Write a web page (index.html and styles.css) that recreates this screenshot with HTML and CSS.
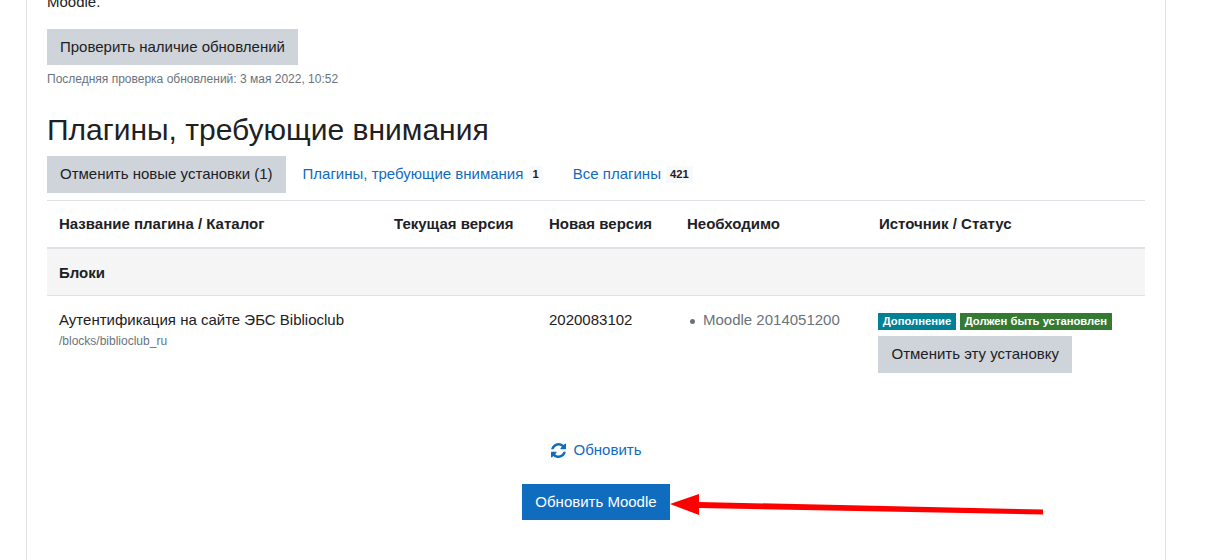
FILE: index.html
```html
<!DOCTYPE html>
<html lang="ru">
<head>
<meta charset="utf-8">
<title>Плагины, требующие внимания</title>
<link rel="stylesheet" href="styles.css">
</head>
<body>
<main class="card">
  <p class="intro">Moodle.</p>
  <a class="btn btn-grey check-btn">Проверить наличие обновлений</a>
  <p class="last-check">Последняя проверка обновлений: 3 мая 2022, 10:52</p>
  <h2 class="title">Плагины, требующие внимания</h2>
  <nav class="filters">
    <a class="btn btn-grey">Отменить новые установки (1)</a>
    <a class="filter-link">Плагины, требующие внимания <span class="count">1</span></a>
    <a class="filter-link">Все плагины <span class="count">421</span></a>
  </nav>
  <table class="plugins">
    <colgroup>
      <col class="c1"><col class="c2"><col class="c3"><col class="c4"><col class="c5">
    </colgroup>
    <thead>
      <tr>
        <th>Название плагина / Каталог</th>
        <th>Текущая версия</th>
        <th>Новая версия</th>
        <th>Необходимо</th>
        <th>Источник / Статус</th>
      </tr>
    </thead>
    <tbody>
      <tr class="group"><th colspan="5">Блоки</th></tr>
      <tr class="plugin">
        <td>Аутентификация на сайте ЭБС Biblioclub<div class="path">/blocks/biblioclub_ru</div></td>
        <td></td>
        <td>2020083102</td>
        <td><ul class="reqs"><li>Moodle 2014051200</li></ul></td>
        <td>
          <div class="badges"><span class="badge badge-info">Дополнение</span><span class="badge badge-ok">Должен быть установлен</span></div>
          <a class="btn btn-grey cancel-btn">Отменить эту установку</a>
        </td>
      </tr>
    </tbody>
  </table>
  <div class="actions">
    <a class="refresh">
      <svg class="refresh-icon" viewBox="128 128 1536 1536" aria-hidden="true"><path d="M1639 1056q0 5-1 7-64 268-268 434.5t-478 166.5q-146 0-282.5-55t-243.5-157l-129 129q-19 19-45 19t-45-19-19-45v-448q0-26 19-45t45-19h448q26 0 45 19t19 45-19 45l-137 137q71 66 161 102t187 36q134 0 250-65t186-179q11-17 53-117 8-23 30-23h192q13 0 22.5 9.5t9.5 22.5zm25-800v448q0 26-19 45t-45 19h-448q-26 0-45-19t-19-45 19-45l138-138q-148-137-349-137-134 0-250 65t-186 179q-11 17-53 117-8 23-30 23h-199q-13 0-22.5-9.5t-9.5-22.5v-7q65-268 270-434.5t480-166.5q146 0 284 55.5t245 156.5l130-129q19-19 45-19t45 19 19 45z"/></svg>
      Обновить
    </a>
    <a class="btn btn-blue">Обновить Moodle</a>
  </div>
  <svg class="arrow" viewBox="0 0 380 30" aria-hidden="true">
    <path d="M0 14 L29 4 L29 12 L373 19.5 L373 24.5 L29 18 L29 25 Z"/>
  </svg>
</main>
</body>
</html>
```
FILE: styles.css
```css
* { box-sizing: border-box; }
html, body { margin: 0; height: 560px; overflow: hidden; background: #fff; }
body {
  font-family: "Liberation Sans", Arial, sans-serif;
  font-size: 15px;
  line-height: 22.5px;
  color: #1d2125;
}
.card {
  position: relative;
  width: 1140px;
  height: 571px;
  margin: -11px 0 0 26px;
  padding: 0 20px;
  border-left: 1px solid #dee2e6;
  border-right: 1px solid #dee2e6;
}
.intro { margin: 0 0 17px; height: 22.5px; padding-top: 1.5px; }
.btn {
  display: inline-block;
  padding: 7px 13px;
  font-size: 15px;
  line-height: 22.5px;
}
.btn-grey { background: #ced4da; color: #1d2125; }
.btn-blue { background: #0f6cbf; color: #fff; }
.check-btn { display: block; width: fit-content; }
.last-check { margin: 5px 0 0; font-size: 12px; line-height: 18px; color: #6a737b; }
.title { margin: 24px 0 0; font-size: 30px; font-weight: 400; line-height: 36px; }
.filters { display: flex; align-items: center; margin-top: 8px; height: 36.5px; }
.filter-link { color: #0f6cbf; margin-left: 17px; white-space: nowrap; }
.filter-link + .filter-link { margin-left: 30px; }
.count {
  display: inline-block;
  padding: 0 4px;
  margin-left: 1px;
  font-size: 11.25px;
  line-height: 17px;
  font-weight: 700;
  color: #1d2125;
  background: #f8f9fa;
  vertical-align: 1px;
}
.plugins {
  width: 1098px;
  margin-top: 7px;
  table-layout: fixed;
  border-collapse: collapse;
  border-top: 1px solid #dee2e6;
}
.c1 { width: 335px; }
.c2 { width: 155px; }
.c3 { width: 138px; }
.c4 { width: 192px; }
.c5 { width: 278px; }
.plugins th, .plugins td { padding: 12px; text-align: left; vertical-align: top; }
.plugins thead th { height: 48px; font-weight: 700; border-bottom: 2px solid #dee2e6; }
.plugins .group th { height: 47px; padding: 13px 12px 10.5px; background: #f5f5f5; border-bottom: 1px solid #dee2e6; font-weight: 700; }
.plugins .plugin td { padding-top: 13px; padding-bottom: 0; height: 112px; }
.path { font-size: 12px; line-height: 18px; margin-top: 0; color: #6a737b; }
.reqs { margin: 0; padding: 0; list-style: none; color: #6a737b; }
.reqs li { display: flex; align-items: center; gap: 8px; padding-left: 3px; }
.reqs li::before { content: ""; flex: none; width: 5px; height: 5px; margin-top: 2px; border-radius: 50%; background: #6a737b; }
.badges { display: flex; gap: 4px; margin: 4px 0 0 -1px; height: 17px; }
.badge {
  padding: 0 4.7px;
  font-size: 11.25px;
  line-height: 17px;
  font-weight: 700;
  color: #fff;
  white-space: nowrap;
}
.badge-info { background: #008196; }
.badge-ok { background: #357a32; }
.cancel-btn { display: block; width: fit-content; margin: 6px 0 0 -1px; padding: 7px 13.5px; }
.actions { display: flex; flex-direction: column; align-items: center; }
.refresh {
  display: flex;
  align-items: center;
  gap: 8px;
  color: #0f6cbf;
  height: 23px;
  margin-top: 31px;
}
.refresh-icon { width: 15px; height: 15px; fill: #0f6cbf; }
.actions .btn-blue { margin-top: 22px; }
.arrow {
  position: absolute;
  left: 643px;
  top: 501px;
  width: 380px;
  height: 30px;
  fill: #ff0000;
}
```
